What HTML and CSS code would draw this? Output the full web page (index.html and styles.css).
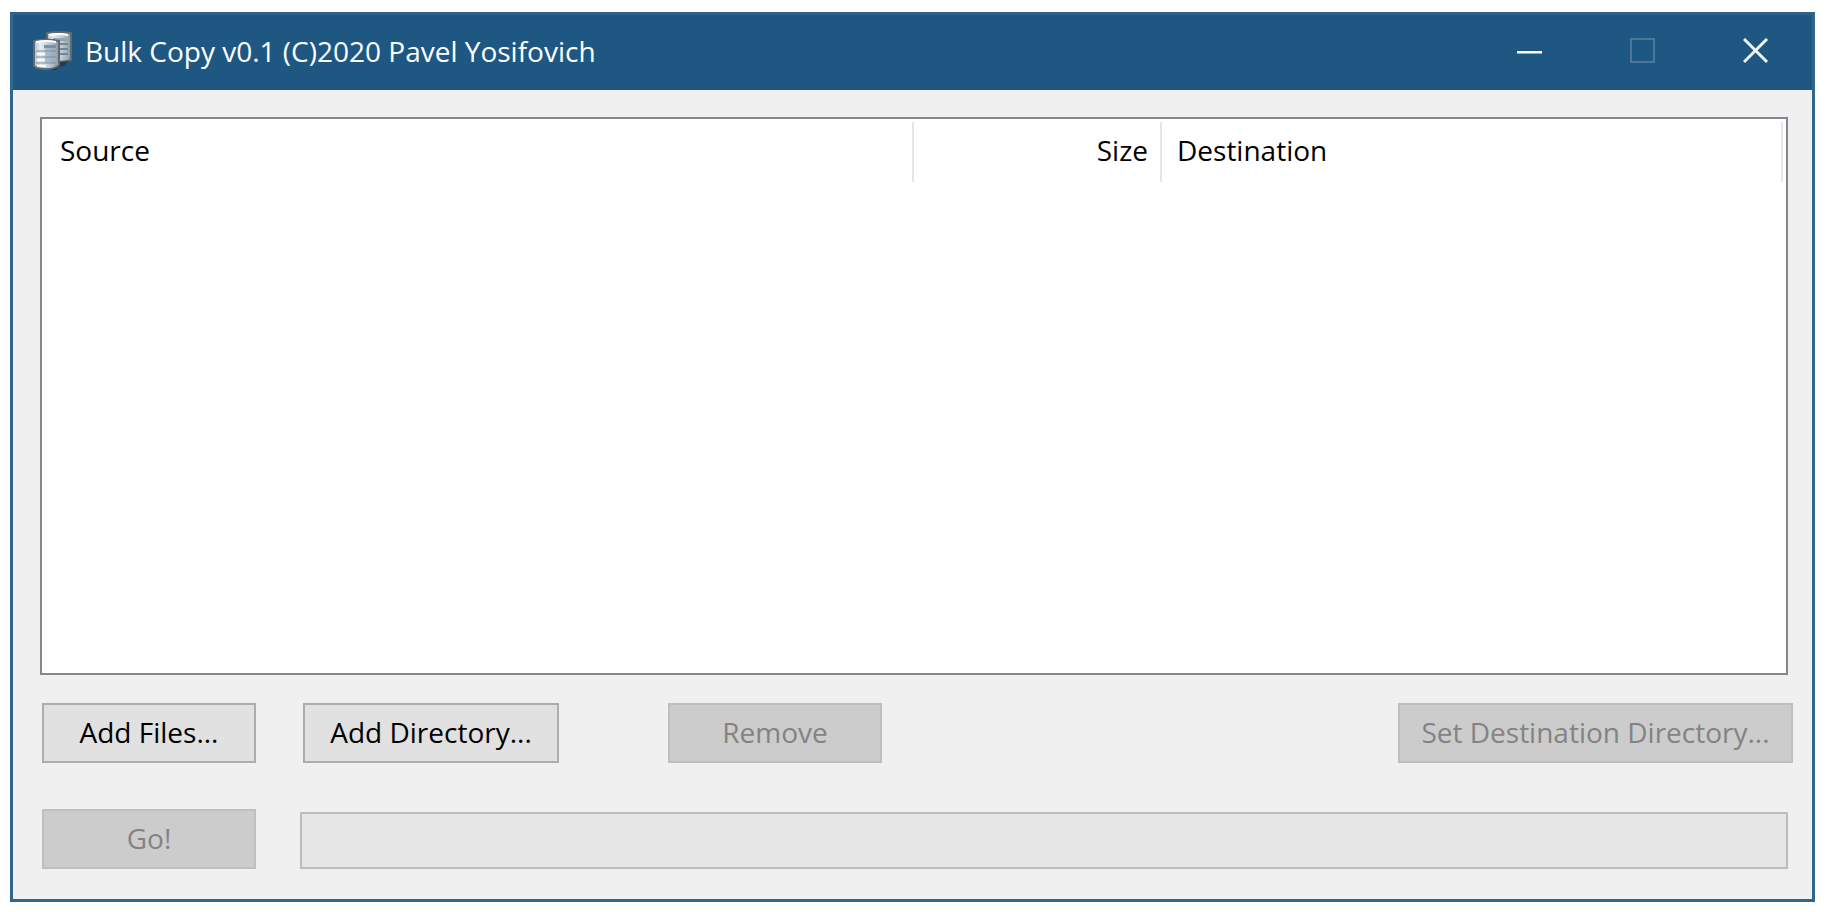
FILE: index.html
```html
<!DOCTYPE html>
<html lang="en">
<head>
<meta charset="utf-8">
<title>Bulk Copy</title>
<link rel="stylesheet" href="styles.css">
</head>
<body>
<main class="window">
  <header class="titlebar">
    <svg class="app-icon" viewBox="0 0 40 40" aria-hidden="true">
      <defs>
        <linearGradient id="metal" x1="0" x2="1" y1="0" y2="0">
          <stop offset="0" stop-color="#b4bec6"/>
          <stop offset=".25" stop-color="#e6edf2"/>
          <stop offset=".65" stop-color="#b7c8d3"/>
          <stop offset="1" stop-color="#8b979f"/>
        </linearGradient>
      </defs>
      <path d="M14 2 Q26 0 38 2 V29 Q32 32 14 30Z" fill="url(#metal)" stroke="#62696f" stroke-width="2"/>
      <path d="M16 4 Q26 2 35 4" fill="none" stroke="#fff" stroke-width="2"/>
      <path d="M20 7h14v3H20z" fill="#8fa5b3"/>
      <path d="M27 13h8M27 18h8M27 23h8" stroke="#6f8798" stroke-width="2"/>
      <path d="M27 36V31l9-1-5 5z" fill="#283a47"/>
      <path d="M16 39h7l4-4v-3z" fill="#25333e"/>
      <path d="M1 10 Q13 7 26 10 V34 Q23 38 13 38 Q4 38 1 35Z" fill="url(#metal)" stroke="#62696f" stroke-width="2"/>
      <path d="M3 11 Q13 9 23 11" fill="none" stroke="#fff" stroke-width="2"/>
      <path d="M11 14h12v3H11z" fill="#7892a4"/>
      <path d="M12 17h9v15h-9z" fill="#8ba5b5" opacity=".5"/>
      <path d="M3 20h20M3 26h20M3 32h20" stroke="#7a8f9d" stroke-width="1"/>
      <path d="M4 23h8M4 29h8M4 35h9" stroke="#f7fafc" stroke-width="2"/>
    </svg>
    <h1 class="title">Bulk Copy v0.1 (C)2020 Pavel Yosifovich</h1>
    <div class="caption-buttons">
      <button class="caption-button" type="button" aria-label="Minimize">
        <svg class="glyph" viewBox="0 0 26 26"><path d="M0 14h25" stroke="#fff" stroke-width="2"/><path d="M0 15.500h25" stroke="#8eabc0"/></svg>
      </button>
      <button class="caption-button" type="button" aria-label="Maximize" disabled>
        <svg class="glyph" viewBox="0 0 26 26"><path d="M1 1h23v23H1z" fill="none" stroke="#4b7899" stroke-width="2"/></svg>
      </button>
      <button class="caption-button" type="button" aria-label="Close">
        <svg class="glyph" viewBox="0 0 26 26"><path d="M1 1l23 23M24 1L1 24" fill="none" stroke="#eef3f6" stroke-width="3"/></svg>
      </button>
    </div>
  </header>
  <section class="content">
    <div class="list">
      <table class="columns">
        <thead>
          <tr>
            <th class="column column-source" scope="col">Source</th>
            <th class="column column-size" scope="col">Size</th>
            <th class="column" scope="col">Destination</th>
          </tr>
        </thead>
        <tbody></tbody>
      </table>
    </div>
    <div class="actions">
      <button class="button" type="button">Add Files...</button>
      <button class="button button-directory" type="button">Add Directory...</button>
      <button class="button button-remove" type="button" disabled>Remove</button>
      <button class="button button-destination" type="button" disabled>Set Destination Directory...</button>
    </div>
    <div class="run">
      <button class="button" type="button" disabled>Go!</button>
      <progress class="progress" value="0" max="100" aria-label="Copy progress"></progress>
    </div>
  </section>
</main>
</body>
</html>
```
FILE: styles.css
```css
* {
  box-sizing: border-box;
}

body {
  margin: 0;
  min-height: 100vh;
  padding: 12px 11px 10px 10px;
  display: flex;
  background: #fff;
  color: #000;
  font: 28px/36px "Open Sans", "Noto Sans", sans-serif;
}

.window {
  flex: 1;
  display: flex;
  flex-direction: column;
  border: 3px solid #2f678f;
  border-top-color: #2b638c;
  background: #f0f0f0;
}

.titlebar {
  display: flex;
  align-items: center;
  height: 75px;
  padding: 0 0 4px 20px;
  background: #1d5782;
  color: #fff;
}

.app-icon {
  width: 40px;
  height: 40px;
}

.title {
  flex: 1;
  margin: 0 0 0 12px;
  font-size: 28px;
  font-weight: 400;
}

.caption-buttons {
  display: flex;
  align-self: stretch;
}

.caption-button {
  display: flex;
  align-items: center;
  justify-content: center;
  width: 113px;
  padding: 0;
  border: 0;
  background: transparent;
}

.glyph {
  width: 26px;
  height: 26px;
}

.content {
  flex: 1;
  display: flex;
  flex-direction: column;
  padding: 27px 24px 30px 27px;
}

.list {
  flex: 1;
  padding: 3px;
  border: 2px solid #828790;
  background: #fff;
}

.columns {
  width: 100%;
  table-layout: fixed;
  border-collapse: separate;
  border-spacing: 0;
}

.column {
  height: 60px;
  padding: 0 12px 4px 15px;
  border-right: 2px solid #e5e5e5;
  font-weight: 400;
  text-align: left;
}

.column-source {
  width: 50%;
}

.column-size {
  width: 248px;
  text-align: right;
}

.actions,
.run {
  display: flex;
  padding-left: 2px;
}

.actions {
  margin: 28px -5px 0 0;
}

.run {
  align-items: flex-end;
  gap: 44px;
  margin-top: 46px;
}

.button {
  width: 214px;
  height: 60px;
  padding: 0 0 2px;
  border: 2px solid #adadad;
  background: #e1e1e1;
  color: #000;
  font: inherit;
  white-space: nowrap;
}

.button:disabled {
  border-color: #bfbfbf;
  background: #ccc;
  color: #838383;
}

.button-directory {
  width: 256px;
  margin-left: 47px;
}

.button-remove {
  margin-left: 109px;
}

.button-destination {
  width: 395px;
  margin-left: auto;
}

.progress {
  appearance: none;
  flex: 1;
  height: 57px;
  border: 2px solid #bcbcbc;
  background: #e6e6e6;
}

.progress::-webkit-progress-bar {
  background: #e6e6e6;
}

.progress::-webkit-progress-value {
  background: #06b025;
}
```
